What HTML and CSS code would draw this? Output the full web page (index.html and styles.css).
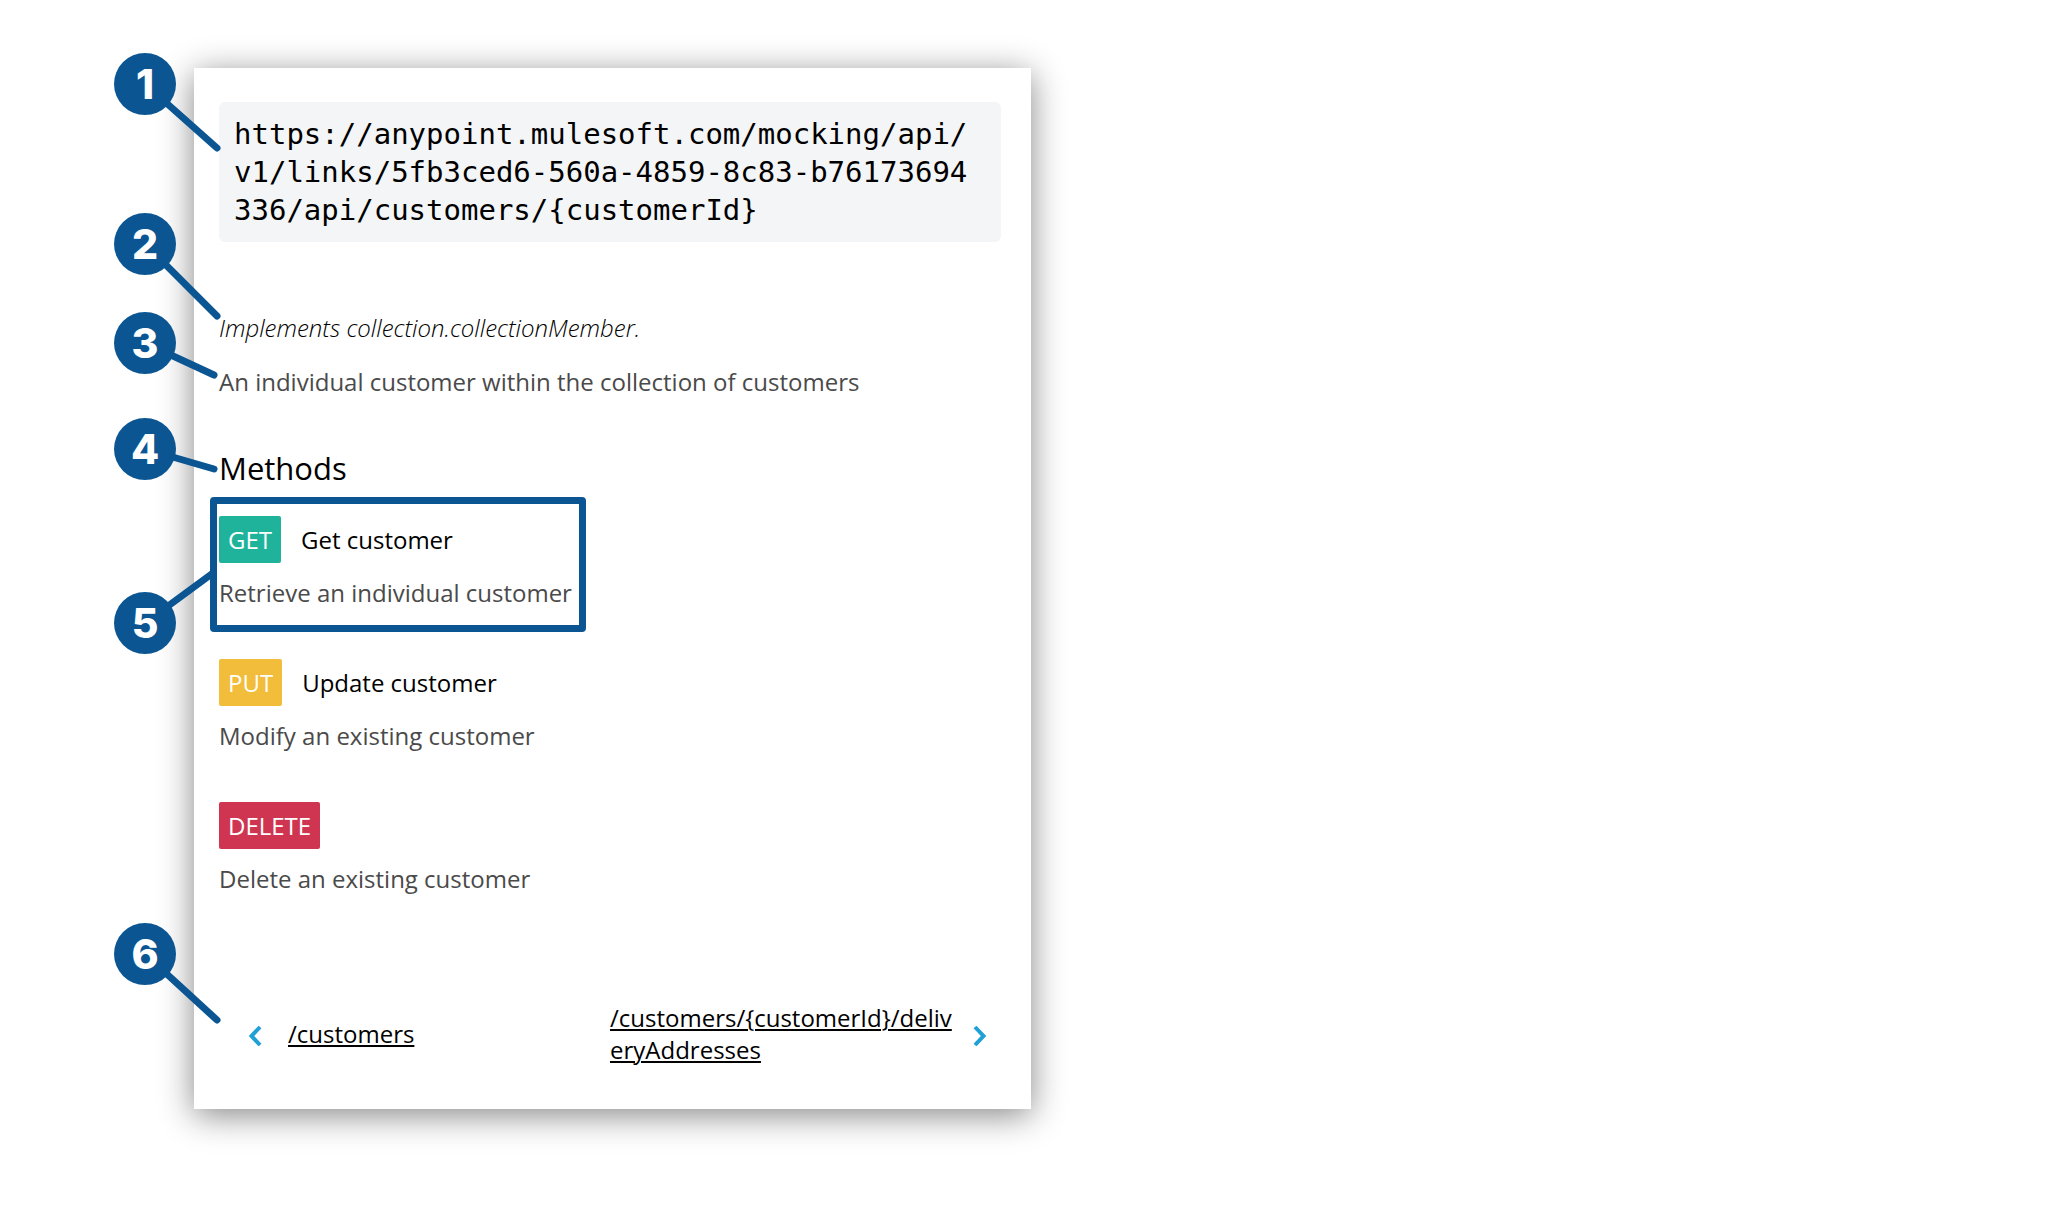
FILE: index.html
```html
<!DOCTYPE html>
<html lang="en">
<head>
<meta charset="utf-8">
<title>API resource: /customers/{customerId}</title>
<link rel="stylesheet" href="styles.css">
</head>
<body>
<main class="page">
  <article class="card">
    <div class="url"><code>https://anypoint.mulesoft.com/mocking/api/v1/links/5fb3ced6-560a-4859-8c83-b76173694336/api/customers/{customerId}</code></div>
    <p class="implements">Implements collection.collectionMember.</p>
    <p class="description">An individual customer within the collection of customers</p>
    <h2 class="heading">Methods</h2>
    <ul class="methods">
      <li class="method method-highlighted">
        <div class="method-head"><span class="verb verb-get">GET</span><span>Get customer</span></div>
        <p class="method-text">Retrieve an individual customer</p>
      </li>
      <li class="method">
        <div class="method-head"><span class="verb verb-put">PUT</span><span>Update customer</span></div>
        <p class="method-text">Modify an existing customer</p>
      </li>
      <li class="method">
        <div class="method-head"><span class="verb verb-delete">DELETE</span></div>
        <p class="method-text">Delete an existing customer</p>
      </li>
    </ul>
    <nav class="pager">
      <div class="pager-side pager-prev">
        <svg class="chevron" viewBox="0 0 14 24" aria-hidden="true"><path d="M12 5 3.500 14l8.500 9"/></svg>
        <a href="#customers">/customers</a>
      </div>
      <div class="pager-side pager-next">
        <a href="#addresses">/customers/{customerId}/deliveryAddresses</a>
        <svg class="chevron" viewBox="0 0 14 24" aria-hidden="true"><path d="M2 5 10.500 14 2 23"/></svg>
      </div>
    </nav>
  </article>
  <svg class="leaders" width="240" height="1060" viewBox="0 0 240 1060" aria-hidden="true">
    <path d="M145 84 217 148M145 244 217 316M145 343 214 375M145 449 214 469M145 623 213 573M145 954 217 1020"/>
  </svg>
  <span class="pin pin-1">1</span>
  <span class="pin pin-2">2</span>
  <span class="pin pin-3">3</span>
  <span class="pin pin-4">4</span>
  <span class="pin pin-5">5</span>
  <span class="pin pin-6">6</span>
</main>
</body>
</html>
```
FILE: styles.css
```css
* { box-sizing: border-box; }

body {
  margin: 0;
  background: #fff;
  color: #000;
  font: 24px/32px "Open Sans", "Noto Sans", sans-serif;
}

p, h2, ul { margin: 0; padding: 0; }

.page {
  position: relative;
  padding: 68px 32px 112px 194px;
}

.card {
  max-width: 837px;
  padding: 34px 30px 43px 25px;
  background: #fff;
  box-shadow: 0 6px 32px rgba(0, 0, 0, .48);
}

.url {
  padding: 13px 24px 13px 15px;
  border-radius: 6px;
  background: #f4f5f7;
}

.url code {
  display: block;
  font: 29px/38px "DejaVu Sans Mono", "Liberation Mono", monospace;
  word-break: break-all;
}

.implements {
  margin-top: 70px;
  font-style: italic;
  font-weight: 300;
}

.description { margin-top: 22px; color: #4a4a4a; }

.heading {
  margin-top: 48px;
  font-size: 31px;
  font-weight: 400;
  line-height: 44px;
}

.methods {
  display: grid;
  gap: 50px;
  justify-items: start;
  margin-top: 26px;
  list-style: none;
}

.method { position: relative; }

.method-highlighted::after {
  content: "";
  position: absolute;
  inset: -19px -14px -23px -9px;
  border: 7px solid #0b5592;
  border-radius: 4px;
}

.method-head { display: flex; align-items: center; gap: 20px; }

.verb {
  padding: 8px 9px 7px;
  border-radius: 2px;
  color: #fff;
}

.verb-get { background: #1fb39b; }
.verb-put { background: #f1bd3a; }
.verb-delete { background: #cf3551; }

.method-text { margin-top: 14px; color: #4a4a4a; }

.pager {
  display: grid;
  grid-template-columns: 1fr 1fr;
  align-items: center;
  margin-top: 107px;
}

.pager-side { display: flex; align-items: center; }
.pager-prev { gap: 26px; padding-left: 29px; }
.pager-next { gap: 18px; padding-right: 14px; }

.pager a {
  color: #000;
  overflow-wrap: anywhere;
  text-decoration-thickness: 2px;
  text-underline-offset: 2px;
}

.chevron {
  flex: none;
  width: 14px;
  height: 24px;
  fill: none;
  stroke: #21a0d8;
  stroke-width: 4;
}

.leaders {
  position: absolute;
  top: 0;
  left: 0;
  fill: none;
  stroke: #0b5592;
  stroke-width: 7;
  stroke-linecap: round;
}

.pin {
  position: absolute;
  left: 114px;
  width: 62px;
  height: 62px;
  border-radius: 50%;
  background: #0b5592;
  color: #fff;
  font: 800 41px/62px Inter, "Liberation Sans", sans-serif;
  text-align: center;
}

.pin-1 { top: 53px; }
.pin-2 { top: 213px; }
.pin-3 { top: 312px; }
.pin-4 { top: 418px; }
.pin-5 { top: 592px; }
.pin-6 { top: 923px; }
```
